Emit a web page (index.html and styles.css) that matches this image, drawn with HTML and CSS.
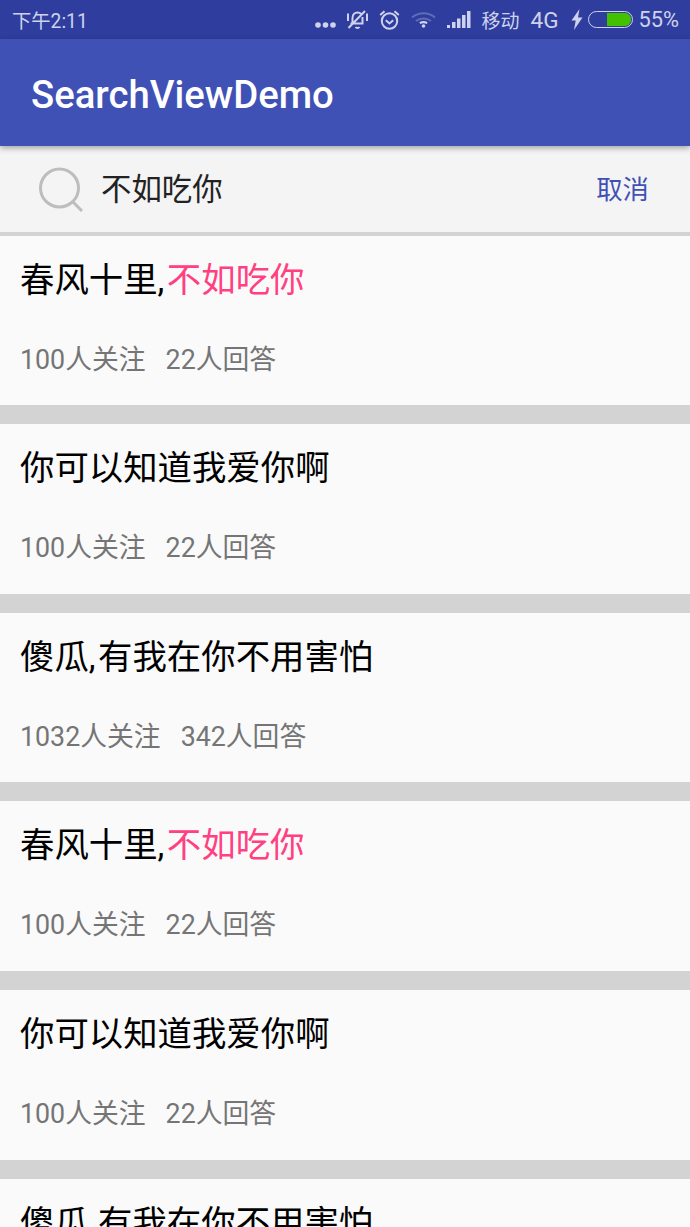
FILE: index.html
```html
<!DOCTYPE html>
<html lang="zh-CN">
<head>
  <meta charset="UTF-8">
  <title>SearchViewDemo</title>
  <link rel="stylesheet" href="styles.css">
</head>
<body>

  <div class="statusbar">
    <span class="time">下午2:11</span>
    <div class="status-right">
      <svg class="solid ic-dots" width="21" height="6" viewBox="0 0 21 6"><circle cx="3" cy="3" r="2.800"/><circle cx="10.500" cy="3" r="2.800"/><circle cx="18" cy="3" r="2.800"/></svg>
      <svg class="ic-bell" width="21" height="20" viewBox="0 0 21 20"><path d="M5.500 13V8c0-3.300 2.200-5.600 5-5.600 1.500 0 2.800.6 3.700 1.600M15.500 7v6.500H3.500M8.500 17c1 1.300 3 1.300 4 0M1 3.500V11M20 3.500V11M1.500 18 18 1"/></svg>
      <svg class="ic-clock" width="21" height="20" viewBox="0 0 21 20"><circle cx="10.500" cy="11" r="7.700"/><path d="M6.800 10.200 10.500 13.500l3.700-3.300M1.200 5 5.500 1.300M19.800 5 15.500 1.300"/></svg>
      <svg class="ic-wifi" width="25" height="16" viewBox="0 0 25 16"><path class="dim" d="M1 5.500C7.500-.2 17.500-.2 24 5.500M5 9c4.500-3.500 10.500-3.500 15 0"/><path d="M8.800 11.200c2.400-1.400 5-1.400 7.400 0"/><circle class="dot" cx="12.500" cy="14" r="1.800"/></svg>
      <svg class="solid" width="24" height="17" viewBox="0 0 24 17"><rect x="0" y="14" width="3" height="3"/><rect x="5" y="11" width="3.500" height="6"/><rect x="10" y="7.500" width="3.500" height="9.500"/><rect x="15" y="4" width="3.500" height="13"/><rect x="20" y="0" width="3.500" height="17"/></svg>
      <span class="carrier">移动</span>
      <span class="net">4G</span>
      <svg class="solid ic-bolt" width="12" height="21" viewBox="0 0 12 21"><path d="M8.500 0 .5 11.500h4.200L3 21 11.500 8.500H7z"/></svg>
      <div class="battery"><div class="battery-level"></div></div>
      <span class="percent">55%</span>
    </div>
  </div>

  <div class="toolbar">SearchViewDemo</div>

  <div class="searchbar">
    <svg class="ic-search" width="46" height="46" viewBox="0 0 46 46"><circle cx="21.500" cy="22" r="19"/><path d="M35 36l9 9"/></svg>
    <span class="query">不如吃你</span>
    <span class="cancel">取消</span>
  </div>

  <div class="list">
    <div class="item">
      <div class="item-title">春风十里<span class="comma">,</span><span class="hit">不如吃你</span></div>
      <div class="item-meta"><span>100人关注</span><span>22人回答</span></div>
    </div>
    <div class="item">
      <div class="item-title">你可以知道我爱你啊</div>
      <div class="item-meta"><span>100人关注</span><span>22人回答</span></div>
    </div>
    <div class="item">
      <div class="item-title">傻瓜<span class="comma">,</span>有我在你不用害怕</div>
      <div class="item-meta"><span>1032人关注</span><span>342人回答</span></div>
    </div>
    <div class="item">
      <div class="item-title">春风十里<span class="comma">,</span><span class="hit">不如吃你</span></div>
      <div class="item-meta"><span>100人关注</span><span>22人回答</span></div>
    </div>
    <div class="item">
      <div class="item-title">你可以知道我爱你啊</div>
      <div class="item-meta"><span>100人关注</span><span>22人回答</span></div>
    </div>
    <div class="item">
      <div class="item-title">傻瓜<span class="comma">,</span>有我在你不用害怕</div>
    </div>
  </div>

</body>
</html>
```

FILE: styles.css
```css
html, body {
  margin: 0;
  padding: 0;
  height: 1227px;
  overflow: hidden;
}
body {
  font-family: Roboto, "Noto Sans CJK SC", sans-serif;
  background: #d3d3d3;
}
.statusbar {
  height: 39px;
  background: #2f3e9e;
  color: #ced2ec;
  display: flex;
  align-items: center;
  justify-content: space-between;
  padding: 0 11px 0 12px;
}
.time {
  font-size: 19.3px;
}
.status-right {
  display: flex;
  align-items: center;
  gap: 11px;
}
.status-right svg {
  fill: none;
  stroke: #ced2ec;
  stroke-width: 2;
  display: block;
}
.status-right .solid {
  fill: #ced2ec;
  stroke: none;
}
.ic-dots {
  margin-top: 10px;
}
.ic-wifi .dim { stroke: #5f6cb6; }
.ic-wifi .dot { fill: #ced2ec; stroke: none; }
.carrier {
  font-size: 19px;
}
.net {
  font-size: 22.5px;
}
.ic-bolt {
  margin-left: 1px;
}
.battery {
  width: 45px;
  height: 17px;
  box-sizing: border-box;
  border: 1.5px solid #ced2ec;
  border-radius: 9px;
  margin-left: -6px;
  margin-right: -5px;
  padding: 1px;
  display: flex;
  justify-content: flex-end;
}
.battery-level {
  width: 24px;
  background: #43c000;
  border-radius: 0 6px 6px 0;
}
.percent {
  font-size: 21.8px;
}
.toolbar {
  height: 107px;
  box-sizing: border-box;
  background: #3f51b5;
  color: #fff;
  font-size: 38.3px;
  font-weight: 500;
  padding-left: 31px;
  line-height: 111px;
  position: relative;
  box-shadow: 0 2px 6px rgba(0, 0, 0, 0.35);
}
.searchbar {
  height: 85.5px;
  background: #f4f4f4;
  border-bottom: 4px solid #d3d3d3;
  display: flex;
  align-items: center;
  padding: 0 41px 0 38px;
}
.ic-search {
  fill: none;
  stroke: #bdbdbd;
  stroke-width: 3;
  margin-right: 17px;
}
.query {
  font-size: 30.4px;
  line-height: 38px;
  margin-top: 3px;
  color: #222;
  flex: 1;
}
.cancel {
  font-size: 26.4px;
  line-height: 34px;
  margin-top: 3px;
  color: #3f51b5;
}
.item {
  height: 169.67px;
  box-sizing: border-box;
  background: #fafafa;
  margin-bottom: 19px;
  padding: 0 20px;
}
.item-title {
  font-size: 34.4px;
  line-height: 40px;
  padding-top: 24px;
  color: #000;
}
.comma {
  margin-right: 2.5px;
}
.hit {
  color: #ff4081;
}
.item-meta {
  display: flex;
  gap: 20px;
  font-size: 26.8px;
  line-height: 32px;
  margin-top: 44px;
  color: #757575;
}
```
